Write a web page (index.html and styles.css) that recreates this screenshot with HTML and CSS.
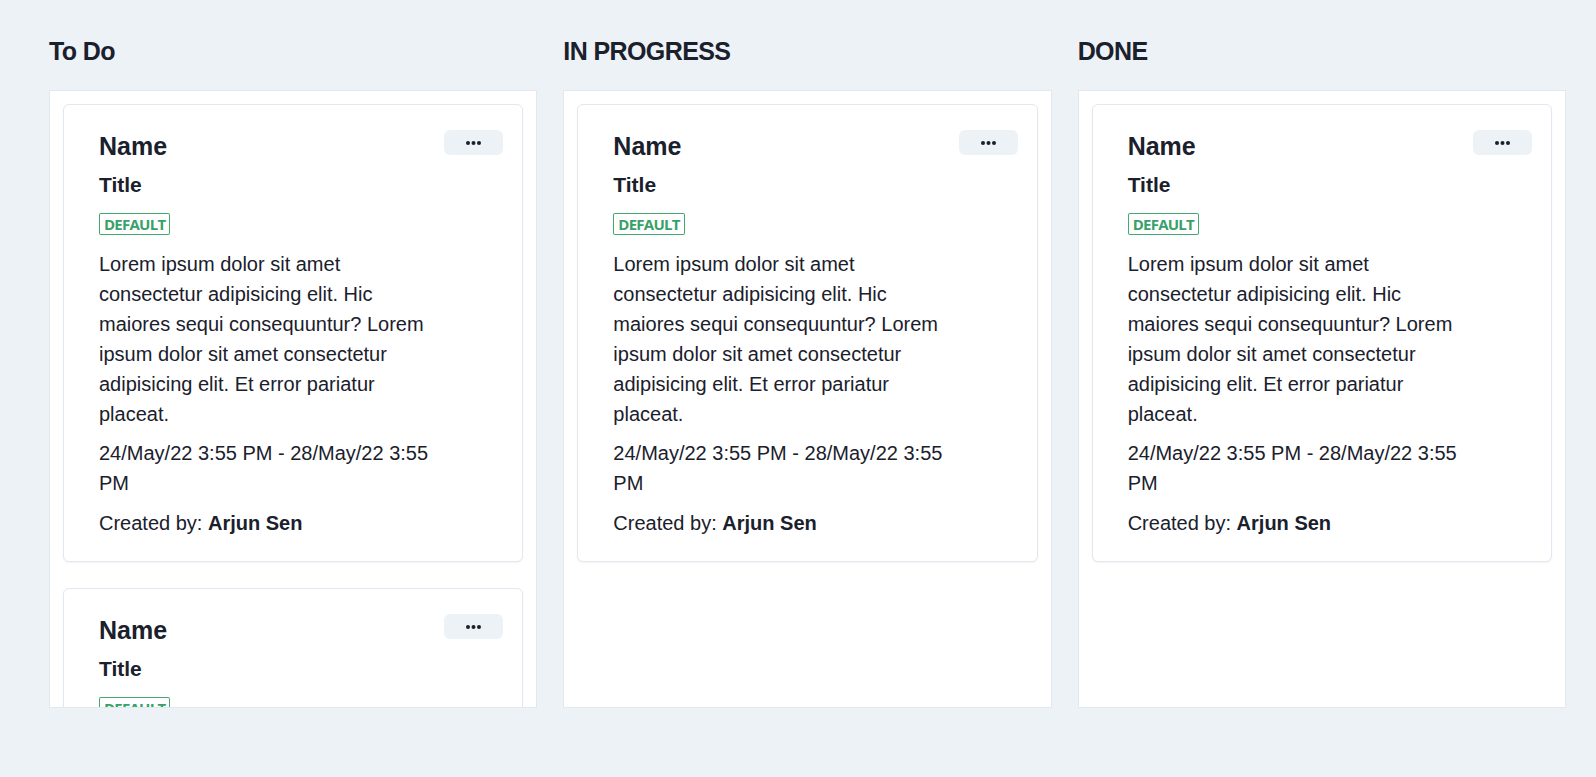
FILE: index.html
```html
<!DOCTYPE html>
<html lang="en">
<head>
<meta charset="utf-8">
<title>Board</title>
<link rel="stylesheet" href="styles.css">
</head>
<body>
<main class="board">
  <section class="column">
    <h2 class="column-title">To Do</h2>
    <div class="column-body">
      <article class="task">
        <div class="task-content">
          <h3 class="task-name">Name</h3>
          <h4 class="task-title">Title</h4>
          <span class="badge">Default</span>
          <p class="task-desc">Lorem ipsum dolor sit amet consectetur adipisicing elit. Hic maiores sequi consequuntur? Lorem ipsum dolor sit amet consectetur adipisicing elit. Et error pariatur placeat.</p>
          <p class="task-dates">24/May/22 3:55 PM - 28/May/22 3:55 PM</p>
          <p class="task-author">Created by: <strong>Arjun Sen</strong></p>
        </div>
        <button class="menu-btn" aria-label="Options"><svg width="15" height="4" viewBox="0 0 15 4"><circle cx="2" cy="2" r="2"/><circle cx="7.5" cy="2" r="2"/><circle cx="13" cy="2" r="2"/></svg></button>
      </article>
      <article class="task">
        <div class="task-content">
          <h3 class="task-name">Name</h3>
          <h4 class="task-title">Title</h4>
          <span class="badge">Default</span>
          <p class="task-desc">Lorem ipsum dolor sit amet consectetur adipisicing elit. Hic maiores sequi consequuntur? Lorem ipsum dolor sit amet consectetur adipisicing elit. Et error pariatur placeat.</p>
          <p class="task-dates">24/May/22 3:55 PM - 28/May/22 3:55 PM</p>
          <p class="task-author">Created by: <strong>Arjun Sen</strong></p>
        </div>
        <button class="menu-btn" aria-label="Options"><svg width="15" height="4" viewBox="0 0 15 4"><circle cx="2" cy="2" r="2"/><circle cx="7.5" cy="2" r="2"/><circle cx="13" cy="2" r="2"/></svg></button>
      </article>
    </div>
  </section>
  <section class="column">
    <h2 class="column-title">IN PROGRESS</h2>
    <div class="column-body">
      <article class="task">
        <div class="task-content">
          <h3 class="task-name">Name</h3>
          <h4 class="task-title">Title</h4>
          <span class="badge">Default</span>
          <p class="task-desc">Lorem ipsum dolor sit amet consectetur adipisicing elit. Hic maiores sequi consequuntur? Lorem ipsum dolor sit amet consectetur adipisicing elit. Et error pariatur placeat.</p>
          <p class="task-dates">24/May/22 3:55 PM - 28/May/22 3:55 PM</p>
          <p class="task-author">Created by: <strong>Arjun Sen</strong></p>
        </div>
        <button class="menu-btn" aria-label="Options"><svg width="15" height="4" viewBox="0 0 15 4"><circle cx="2" cy="2" r="2"/><circle cx="7.5" cy="2" r="2"/><circle cx="13" cy="2" r="2"/></svg></button>
      </article>
    </div>
  </section>
  <section class="column">
    <h2 class="column-title">DONE</h2>
    <div class="column-body">
      <article class="task">
        <div class="task-content">
          <h3 class="task-name">Name</h3>
          <h4 class="task-title">Title</h4>
          <span class="badge">Default</span>
          <p class="task-desc">Lorem ipsum dolor sit amet consectetur adipisicing elit. Hic maiores sequi consequuntur? Lorem ipsum dolor sit amet consectetur adipisicing elit. Et error pariatur placeat.</p>
          <p class="task-dates">24/May/22 3:55 PM - 28/May/22 3:55 PM</p>
          <p class="task-author">Created by: <strong>Arjun Sen</strong></p>
        </div>
        <button class="menu-btn" aria-label="Options"><svg width="15" height="4" viewBox="0 0 15 4"><circle cx="2" cy="2" r="2"/><circle cx="7.5" cy="2" r="2"/><circle cx="13" cy="2" r="2"/></svg></button>
      </article>
    </div>
  </section>
</main>
</body>
</html>
```
FILE: styles.css
```css
* {
  box-sizing: border-box;
}

html, body {
  margin: 0;
  padding: 0;
}

body {
  background: #edf2f7;
  color: #1a202c;
  font-family: "Liberation Sans", Arial, sans-serif;
  font-size: 20px;
  line-height: 30px;
}

.board {
  height: 777px;
  padding: 36px 30px 69px 49px;
  display: grid;
  grid-template-columns: repeat(3, 1fr);
  column-gap: 26px;
}

.column {
  display: flex;
  flex-direction: column;
  min-height: 0;
}

.column-title {
  margin: 0 0 24px;
  font-size: 25px;
  line-height: 30px;
  font-weight: 700;
  letter-spacing: -0.6px;
}

.column-body {
  flex: 1;
  min-height: 0;
  background: #ffffff;
  border: 1px solid #e2e8f0;
  padding: 13px;
  overflow: hidden;
  display: flex;
  flex-direction: column;
  gap: 26px;
}

.task {
  flex: none;
  display: flex;
  align-items: flex-start;
  gap: 8px;
  background: #ffffff;
  border: 1px solid #e2e8f0;
  border-radius: 6px;
  box-shadow: 0 1px 2px rgba(0, 0, 0, 0.05);
  padding: 25px 19px 23px 35px;
}

.task-content {
  flex: 1;
  min-width: 0;
  display: flex;
  flex-direction: column;
  align-items: flex-start;
}

.task-name {
  margin: 0;
  font-size: 25px;
  line-height: 32px;
  font-weight: 700;
}

.task-title {
  margin: 11px 0 0;
  font-size: 21px;
  line-height: 24px;
  font-weight: 700;
}

.badge {
  margin-top: 16px;
  display: inline-block;
  height: 22px;
  padding: 0 5px;
  font-family: "Open Sans", "Liberation Sans", sans-serif;
  font-size: 15px;
  line-height: 22px;
  font-weight: 700;
  letter-spacing: -0.75px;
  text-transform: uppercase;
  color: #38a169;
  border-radius: 2px;
  box-shadow: inset 0 0 0 1px #48a872;
}

.task-desc {
  margin: 14px 0 0;
}

.task-dates {
  margin: 9px 0 0;
}

.task-author {
  margin: 10px 0 0;
}

.task-author strong {
  font-weight: 700;
}

.menu-btn {
  flex: none;
  width: 59px;
  height: 25px;
  border: none;
  border-radius: 6px;
  background: #edf2f7;
  padding: 0;
  display: flex;
  align-items: center;
  justify-content: center;
  color: #1a202c;
  cursor: pointer;
}

.menu-btn svg {
  display: block;
  fill: currentColor;
}
```
